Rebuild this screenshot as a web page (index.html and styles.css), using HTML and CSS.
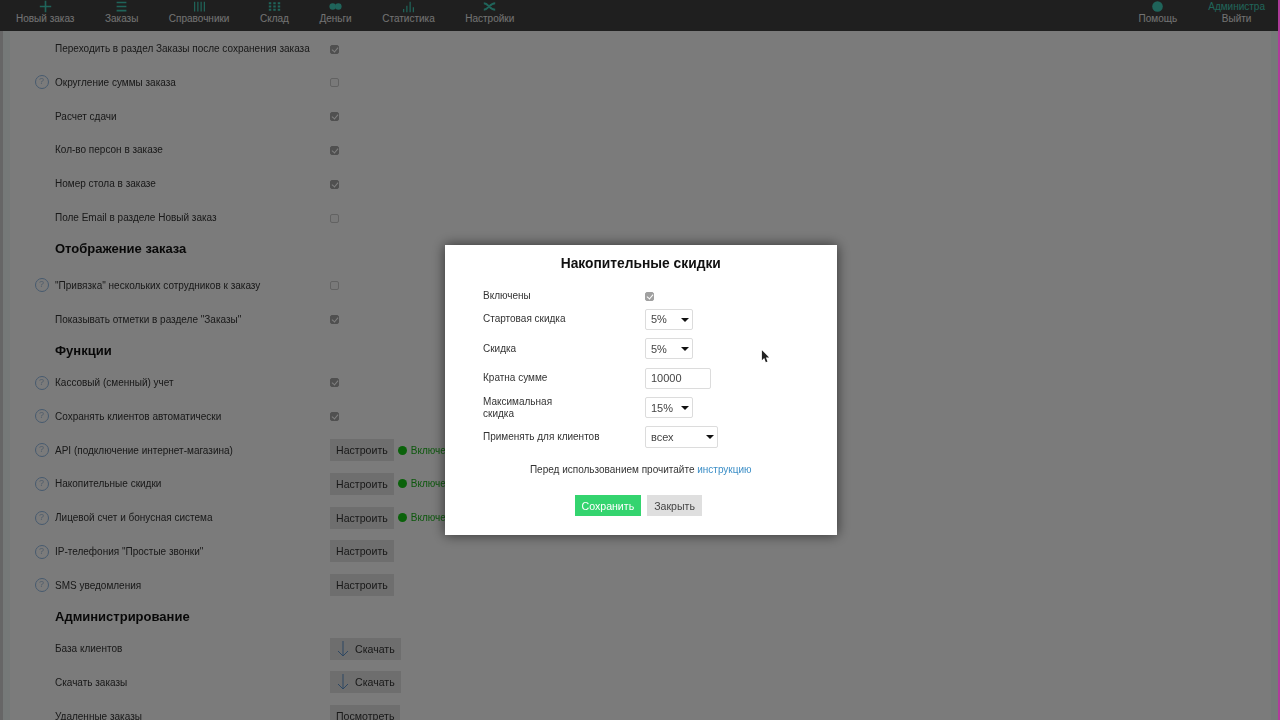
FILE: index.html
```html
<!DOCTYPE html>
<html lang="ru">
<head>
    <meta charset="UTF-8">
    <meta name="viewport" content="width=device-width, initial-scale=1.0">
    <title>Настройки</title>
    <link rel="stylesheet" href="styles.css">
</head>
<body>
    <div class="page">
        <div class="header">
            <div class="nav">
                <a class="nav-item"><svg viewBox="0 0 16 16"><path d="M8 1v14M1 8h14" stroke-width="2"/></svg>Новый заказ</a>
                <a class="nav-item"><svg viewBox="0 0 16 16"><path d="M2 3h12M2 8h12M2 13h12" stroke-width="2"/></svg>Заказы</a>
                <a class="nav-item"><svg viewBox="0 0 16 16"><path d="M2 2v12M6 2v12M10 2v12M14 2v12" stroke-width="1.5"/></svg>Справочники</a>
                <a class="nav-item"><svg viewBox="0 0 16 16"><path d="M1 4h3M6.5 4h3M12 4h3M1 8h3M6.5 8h3M12 8h3M1 12h3M6.5 12h3M12 12h3" stroke-width="2.6"/></svg>Склад</a>
                <a class="nav-item"><svg viewBox="0 0 16 16"><circle class="fill" cx="4.5" cy="8" r="4"/><circle class="fill" cx="11.5" cy="8" r="4"/></svg>Деньги</a>
                <a class="nav-item"><svg viewBox="0 0 16 16"><path d="M2 11v4M6 7v8M10 2v13M14 9v6" stroke-width="1.5"/></svg>Статистика</a>
                <a class="nav-item"><svg viewBox="0 0 16 16"><path d="M1 4c6 0 7 8 14 8M1 12c6 0 7-8 14-8" stroke-width="2.4"/></svg>Настройки</a>
            </div>
            <div class="nav-right">
                <a class="nav-item"><svg viewBox="0 0 16 16"><circle class="fill" cx="8" cy="8" r="6.5"/></svg>Помощь</a>
                <a class="nav-item"><span class="user-name">Администра</span>Выйти</a>
            </div>
        </div>

        <div class="settings">
            <div class="row"><span class="label">Переходить в раздел Заказы после сохранения заказа</span><input type="checkbox" checked></div>
            <div class="row"><span class="hint">?</span><span class="label">Округление суммы заказа</span><input type="checkbox"></div>
            <div class="row"><span class="label">Расчет сдачи</span><input type="checkbox" checked></div>
            <div class="row"><span class="label">Кол-во персон в заказе</span><input type="checkbox" checked></div>
            <div class="row"><span class="label">Номер стола в заказе</span><input type="checkbox" checked></div>
            <div class="row"><span class="label">Поле Email в разделе Новый заказ</span><input type="checkbox"></div>

            <h3 class="section-title section-first">Отображение заказа</h3>
            <div class="row"><span class="hint">?</span><span class="label">"Привязка" нескольких сотрудников к заказу</span><input type="checkbox"></div>
            <div class="row"><span class="label">Показывать отметки в разделе "Заказы"</span><input type="checkbox" checked></div>

            <h3 class="section-title">Функции</h3>
            <div class="row"><span class="hint">?</span><span class="label">Кассовый (сменный) учет</span><input type="checkbox" checked></div>
            <div class="row"><span class="hint">?</span><span class="label">Сохранять клиентов автоматически</span><input type="checkbox" checked></div>
            <div class="row"><span class="hint">?</span><span class="label">API (подключение интернет-магазина)</span><button class="btn">Настроить</button><span class="status">Включено</span></div>
            <div class="row"><span class="hint">?</span><span class="label">Накопительные скидки</span><button class="btn">Настроить</button><span class="status">Включено</span></div>
            <div class="row"><span class="hint">?</span><span class="label">Лицевой счет и бонусная система</span><button class="btn">Настроить</button><span class="status">Включено</span></div>
            <div class="row"><span class="hint">?</span><span class="label">IP-телефония "Простые звонки"</span><button class="btn">Настроить</button></div>
            <div class="row"><span class="hint">?</span><span class="label">SMS уведомления</span><button class="btn">Настроить</button></div>

            <h3 class="section-title">Администрирование</h3>
            <div class="row"><span class="label">База клиентов</span><button class="btn"><svg class="arrow" viewBox="0 0 14 18"><path d="M7 1v15M2 11l5 5 5-5"/></svg>Скачать</button></div>
            <div class="row"><span class="label">Скачать заказы</span><button class="btn"><svg class="arrow" viewBox="0 0 14 18"><path d="M7 1v15M2 11l5 5 5-5"/></svg>Скачать</button></div>
            <div class="row"><span class="label">Удаленные заказы</span><button class="btn">Посмотреть</button></div>
        </div>
    </div>

    <div class="overlay"></div>
    <div class="edge-left"></div>
    <div class="edge-right"></div>

    <div class="modal">
        <h2 class="modal-title">Накопительные скидки</h2>
        <div class="form-row form-check"><label>Включены</label><input type="checkbox" checked></div>
        <div class="form-row"><label>Стартовая скидка</label><div class="select select-small">5%</div></div>
        <div class="form-row"><label>Скидка</label><div class="select select-small">5%</div></div>
        <div class="form-row"><label>Кратна сумме</label><div class="text-input">10000</div></div>
        <div class="form-row"><label class="label-narrow">Максимальная скидка</label><div class="select select-small">15%</div></div>
        <div class="form-row"><label>Применять для клиентов</label><div class="select select-wide">всех</div></div>
        <p class="note">Перед использованием прочитайте <a>инструкцию</a></p>
        <div class="modal-buttons">
            <button class="btn-save">Сохранить</button>
            <button class="btn-close">Закрыть</button>
        </div>
    </div>

    <svg class="cursor" viewBox="0 0 10 15"><path d="M1 0v11l2.6-2.4 1.8 4.6 1.8-.8-1.8-4.4H9z"/></svg>
</body>
</html>
```

FILE: styles.css
```css
* {
    margin: 0;
    padding: 0;
    box-sizing: border-box;
}

body {
    font-family: "Liberation Sans", Arial, sans-serif;
    background: #f6f6f6;
    height: 720px;
    overflow: hidden;
    color: #333;
}

.page {
    height: 720px;
    overflow: hidden;
    filter: blur(0.6px);
}

.header {
    height: 31px;
    background: #3e3e3e;
    display: flex;
    justify-content: space-between;
    overflow: hidden;
}

.nav {
    display: flex;
    gap: 30.5px;
    padding-left: 16px;
}

.nav-right {
    display: flex;
    gap: 31px;
    padding-right: 15px;
}

.nav-item {
    display: flex;
    flex-direction: column;
    align-items: center;
    justify-content: flex-end;
    height: 25px;
    font-size: 10px;
    line-height: 12px;
    color: #e4e4e4;
    white-space: nowrap;
}

.nav-item svg {
    width: 13px;
    height: 13px;
    flex: none;
    fill: none;
    stroke: #3fc9b4;
}

.nav-item svg .fill {
    fill: #3fc9b4;
    stroke: none;
}

.user-name {
    color: #3fc9b4;
}

.settings {
    width: 640px;
    padding: 0.7px 0 0 33px;
}

.row {
    display: flex;
    align-items: center;
    height: 33.8px;
    position: relative;
    padding-left: 22px;
    font-size: 10px;
}

.label {
    width: 275px;
    flex: none;
}

input[type="checkbox"] {
    appearance: none;
    width: 9px;
    height: 9px;
    margin-top: 1px;
    border: 1px solid #c4c4c4;
    border-radius: 2px;
    background: #f2f2f2;
    position: relative;
}

input[type="checkbox"]:checked {
    background: #a0a0a0;
    border-color: #a0a0a0;
}

input[type="checkbox"]:checked::after {
    content: '';
    position: absolute;
    left: 1.5px;
    top: 0;
    width: 3px;
    height: 5px;
    border-right: 1px solid #fff;
    border-bottom: 1px solid #fff;
    transform: rotate(40deg);
}

.hint {
    position: absolute;
    left: 1.5px;
    top: 10px;
    width: 14px;
    height: 14px;
    border: 1.5px solid #8db4dc;
    border-radius: 50%;
    color: #a3bcd6;
    font-size: 9px;
    line-height: 11px;
    text-align: center;
}

.section-title {
    height: 29.5px;
    padding-left: 22px;
    font-size: 13px;
    line-height: 30px;
    color: #111;
}

.section-first {
    margin-bottom: 4.5px;
}

.btn {
    display: flex;
    align-items: center;
    height: 22px;
    padding: 0 6px;
    border: none;
    background: #dcdcdc;
    font-family: inherit;
    font-size: 10.6px;
    color: #333;
    white-space: nowrap;
}

.status {
    display: flex;
    align-items: center;
    margin-left: 4px;
    font-size: 10px;
    color: #1cb01c;
    white-space: nowrap;
}

.status::before {
    content: '';
    width: 9px;
    height: 9px;
    border-radius: 50%;
    background: #14c414;
    margin-right: 4px;
}

.arrow {
    width: 14px;
    height: 18px;
    margin-right: 5px;
    fill: none;
    stroke: #5b8ec4;
    stroke-width: 1;
}

.overlay {
    position: fixed;
    top: 0;
    left: 0;
    right: 0;
    bottom: 0;
    background: rgba(0, 0, 0, 0.5);
}

/* edges of the window captured in the frame */
.edge-left {
    position: fixed;
    top: 31px;
    bottom: 0;
    left: 0;
    width: 10px;
    border-left: 3px solid #666;
    background: #757978;
}

.edge-right {
    position: fixed;
    top: 31px;
    bottom: 0;
    right: 2px;
    width: 7px;
    background: #757a79;
}

.edge-right::after {
    content: '';
    position: absolute;
    top: -31px;
    bottom: 0;
    right: -2px;
    width: 2px;
    background: #b03a9a;
}

.modal {
    position: fixed;
    left: 445px;
    top: 245px;
    width: 391.5px;
    height: 290px;
    background: #fff;
    box-shadow: 0 0 12px rgba(0, 0, 0, 0.6);
    padding: 11px 38px 0;
    font-size: 10px;
    color: #333;
    filter: blur(0.35px);
}

.modal-title {
    font-size: 13.8px;
    line-height: 16px;
    text-align: center;
    color: #111;
    margin-bottom: 14.5px;
}

.form-row {
    display: flex;
    align-items: center;
    height: 29.5px;
}

.form-check {
    height: 18px;
}

.form-row label {
    width: 162px;
    flex: none;
    line-height: 12px;
}

.form-row .label-narrow {
    padding-right: 80px;
}

.select,
.text-input {
    display: flex;
    align-items: center;
    height: 21px;
    padding-left: 5px;
    border: 1px solid #dcdcdc;
    border-radius: 2px;
    font-size: 11px;
    color: #444;
    position: relative;
}

.select-small {
    width: 48px;
}

.select-wide {
    width: 73px;
    height: 22px;
}

.text-input {
    width: 66px;
}

.select::after {
    content: '';
    position: absolute;
    right: 3px;
    top: 8px;
    border-left: 4px solid transparent;
    border-right: 4px solid transparent;
    border-top: 4px solid #111;
}

.note {
    text-align: center;
    line-height: 12px;
    margin-top: 11.5px;
}

.note a {
    color: #3d8fc7;
}

.modal-buttons {
    display: flex;
    justify-content: center;
    gap: 6px;
    margin-top: 19.5px;
    padding-right: 5px;
}

.btn-save,
.btn-close {
    height: 21px;
    padding: 0 7px;
    border: none;
    font-family: inherit;
    font-size: 10.6px;
}

.btn-save {
    background: #34d46f;
    color: #fff;
}

.btn-close {
    background: #dfdfdf;
    color: #444;
}

.cursor {
    position: fixed;
    left: 761px;
    top: 350px;
    width: 9px;
    height: 14px;
    fill: #222;
}
```
